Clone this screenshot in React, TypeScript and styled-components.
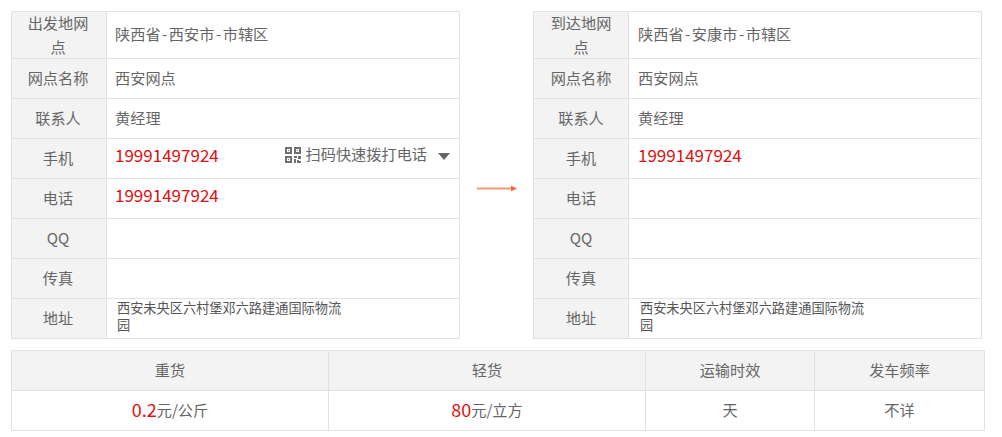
import React from "react";
import styled, { createGlobalStyle } from "styled-components";

const Global = createGlobalStyle`
  html, body { margin: 0; padding: 0; background: #fff; }
  body { font-family: "Noto Sans CJK SC", "Liberation Sans", sans-serif; color: #666; }
`;

const Page = styled.div`
  width: 1002px;
  height: 437px;
  box-sizing: border-box;
  padding: 11px 0 0 11px;
  overflow: hidden;
`;

const Route = styled.div`
  display: flex;
  align-items: flex-start;
  width: 972px;
`;

const Table = styled.div`
  width: 449px;
  flex: none;
  border-top: 1px solid #e2e2e2;
  border-left: 1px solid #e2e2e2;
  border-right: 1px solid #e2e2e2;
  box-sizing: border-box;
`;

const Row = styled.div<{ $h?: number }>`
  display: flex;
  height: ${(p) => p.$h ?? 40}px;
  box-sizing: border-box;
  border-bottom: 1px solid #e2e2e2;
`;

const Label = styled.div<{ $inset: number }>`
  width: 95px;
  flex: none;
  box-sizing: border-box;
  background: #f3f3f3;
  border-right: 1px solid #e2e2e2;
  display: flex;
  align-items: center;
  justify-content: center;
  text-align: center;
  padding: 0 ${(p) => 16 - p.$inset}px 3px ${(p) => 14 + p.$inset}px;
  font-size: 15.2px;
  line-height: 24px;
  color: #666;
`;

const Value = styled.div<{ $inset: number }>`
  flex: 1;
  min-width: 0;
  display: flex;
  align-items: center;
  justify-content: space-between;
  padding: 0 0 4px ${(p) => 8 + p.$inset}px;
  font-size: 15.2px;
  line-height: 20px;
  color: #666;
`;

const Dash = styled.span`
  padding: 0 1.5px;
`;

const Phone = styled.span`
  color: #e01010;
  font-size: 17px;
  position: relative;
  top: -2px;
`;

const Address = styled.div`
  width: 232px;
  padding: 0 0 2px 2px;
  font-size: 13.2px;
  line-height: 17px;
  color: #555;
  word-break: break-all;
`;

const QrAction = styled.span`
  display: flex;
  align-items: center;
  font-size: 15.2px;
  color: #666;
  margin: 0 9px 8px 0;
`;

const QrGlyph = styled.svg`
  margin-top: 4px;
`;

const QrText = styled.span`
  margin: 0 11px 0 5px;
`;

const Caret = styled.i`
  width: 0;
  height: 0;
  margin-top: 8px;
  border-left: 6px solid transparent;
  border-right: 6px solid transparent;
  border-top: 7px solid #666;
`;

const ArrowSlot = styled.div`
  width: 73px;
  flex: none;
  height: 328px;
  display: flex;
  align-items: flex-start;
  justify-content: center;
  padding-top: 174px;
  box-sizing: border-box;
`;

const Rates = styled.div`
  margin-top: 11px;
  width: 974px;
  display: grid;
  grid-template-columns: 317px 317px 169px 1fr;
  border-top: 1px solid #e2e2e2;
  border-left: 1px solid #e2e2e2;
  box-sizing: border-box;
`;

const RateCell = styled.div<{ $head?: boolean }>`
  height: 40px;
  box-sizing: border-box;
  border-right: 1px solid #e2e2e2;
  border-bottom: 1px solid #e2e2e2;
  display: flex;
  align-items: center;
  justify-content: center;
  padding-bottom: 4px;
  font-size: 15.2px;
  line-height: 20px;
  color: #666;
  background: ${(p) => (p.$head ? "#f3f3f3" : "#fff")};
`;

const Price = styled.span`
  color: #e01010;
  font-size: 18px;
`;

const QrIcon = () => (
  <QrGlyph width="16" height="16" viewBox="0 0 16 16" fill="#707070">
    <path d="M0 0h7v7H0zM2 2v3h3V2zM9 0h7v7H9zM11 2v3h3V2zM0 9h7v7H0zM2 11v3h3v-3z" fillRule="evenodd" />
    <path d="M3 3h1v1H3zM12 3h1v1h-1zM3 12h1v1H3zM9 9h3v2H9zM13 9h3v3h-3zM9 12h2v4H9zM12 13h2v1h2v2h-4z" />
  </QrGlyph>
);

const Arrow = () => (
  <svg width="40" height="7" viewBox="0 0 40 7">
    <rect x="0" y="2.5" width="34" height="2" fill="#f3996f" />
    <path d="M34 0.8L40 3.5L34 6.2z" fill="#ee6a3a" />
  </svg>
);

type Side = {
  title: string;
  from: string;
  city: string;
  phone: string;
  tel?: string;
  action?: boolean;
  inset?: number;
};

const Station = ({ title, from, city, phone, tel, action, inset = 0 }: Side) => (
  <Table>
    <Row $h={47}>
      <Label $inset={inset}>{title}</Label>
      <Value $inset={inset}>
        <span>
          {from}
          <Dash>-</Dash>
          {city}
          <Dash>-</Dash>
          市辖区
        </span>
      </Value>
    </Row>
    <Row>
      <Label $inset={inset}>网点名称</Label>
      <Value $inset={inset}>西安网点</Value>
    </Row>
    <Row>
      <Label $inset={inset}>联系人</Label>
      <Value $inset={inset}>黄经理</Value>
    </Row>
    <Row>
      <Label $inset={inset}>手机</Label>
      <Value $inset={inset}>
        <Phone>{phone}</Phone>
        {action && (
          <QrAction>
            <QrIcon />
            <QrText>扫码快速拨打电话</QrText>
            <Caret />
          </QrAction>
        )}
      </Value>
    </Row>
    <Row>
      <Label $inset={inset}>电话</Label>
      <Value $inset={inset}>{tel && <Phone>{tel}</Phone>}</Value>
    </Row>
    <Row>
      <Label $inset={inset}>QQ</Label>
      <Value $inset={inset} />
    </Row>
    <Row>
      <Label $inset={inset}>传真</Label>
      <Value $inset={inset} />
    </Row>
    <Row>
      <Label $inset={inset}>地址</Label>
      <Value $inset={inset}>
        <Address>西安未央区六村堡邓六路建通国际物流园</Address>
      </Value>
    </Row>
  </Table>
);

export default function App() {
  return (
    <Page>
      <Global />
      <Route>
        <Station title="出发地网点" from="陕西省" city="西安市" phone="19991497924" tel="19991497924" action />
        <ArrowSlot>
          <Arrow />
        </ArrowSlot>
        <Station title="到达地网点" from="陕西省" city="安康市" phone="19991497924" inset={1} />
      </Route>
      <Rates>
        <RateCell $head>重货</RateCell>
        <RateCell $head>轻货</RateCell>
        <RateCell $head>运输时效</RateCell>
        <RateCell $head>发车频率</RateCell>
        <RateCell><Price>0.2</Price>元/公斤</RateCell>
        <RateCell><Price>80</Price>元/立方</RateCell>
        <RateCell>天</RateCell>
        <RateCell>不详</RateCell>
      </Rates>
    </Page>
  );
}
